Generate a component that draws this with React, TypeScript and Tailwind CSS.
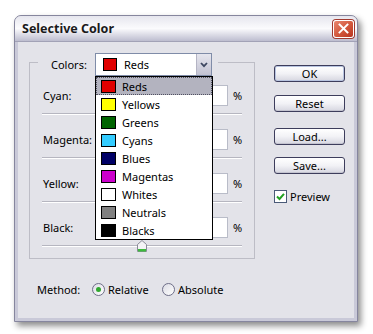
const items: { name: string; sw: string }[] = [
  { name: "Reds", sw: "bg-[#e00000]" },
  { name: "Yellows", sw: "bg-[#ffff00]" },
  { name: "Greens", sw: "bg-[#006400]" },
  { name: "Cyans", sw: "bg-[#33ccff]" },
  { name: "Blues", sw: "bg-[#000066]" },
  { name: "Magentas", sw: "bg-[#cc00cc]" },
  { name: "Whites", sw: "bg-[#ffffff]" },
  { name: "Neutrals", sw: "bg-[#808080]" },
  { name: "Blacks", sw: "bg-[#000000]" },
];

const rows = ["Cyan:", "Magenta:", "Yellow:", "Black:"];

function Button({ label, isDefault }: { label: string; isDefault?: boolean }) {
  return (
    <div
      className={
        "w-[71px] h-[17px] rounded-[3px] border border-[#3d3d5c] bg-gradient-to-b from-[#ffffff] via-[#f2f2f6] to-[#d6d6e0] flex items-center justify-center text-[11px] leading-none text-black " +
        (isDefault ? "shadow-[inset_0_0_0_1px_#b8c4e0]" : "shadow-[inset_0_-1px_0_#c4c4d0]")
      }
    >
      {label}
    </div>
  );
}

function Radio({ checked }: { checked?: boolean }) {
  return (
    <div className="w-[13px] h-[13px] rounded-full border border-[#6e6e88] bg-gradient-to-br from-[#dcdce4] to-[#ffffff] flex items-center justify-center">
      {checked && <div className="w-[5px] h-[5px] rounded-full bg-[#2fa82f]" />}
    </div>
  );
}

export default function App() {
  return (
    <div className="w-[373px] h-[334px] bg-white overflow-hidden font-['Noto_Sans',sans-serif] text-black">
      <div className="ml-[14px] mt-[15px] w-[344px] h-[307px] flex flex-col rounded-t-[7px] border border-[#86869e] bg-[#c9c9d8] shadow-[3px_4px_6px_rgba(0,0,0,0.45)]">
        {/* Title bar */}
        <div className="h-[26px] shrink-0 rounded-t-[6px] bg-gradient-to-b from-[#e6e6ee] via-[#fbfbfd] to-[#bdbdcf] flex items-center justify-between pl-[7px] pr-[3px] border-b border-[#a2a2b6]">
          <span className="text-[12.5px] font-bold leading-none text-[#1a1a1a] pt-[2px]">Selective Color</span>
          <div className="w-[21px] h-[18px] rounded-[3px] border border-white bg-gradient-to-br from-[#e9866f] via-[#d45a3e] to-[#b8341f] shadow-[0_0_0_1px_#a03a30] flex items-center justify-center">
            <svg width="11" height="11" viewBox="0 0 11 11">
              <path d="M1.5 1.5 L9.5 9.5 M9.5 1.5 L1.5 9.5" stroke="white" strokeWidth="1.9" strokeLinecap="square" />
            </svg>
          </div>
        </div>
        {/* Body */}
        <div className="flex-1 mx-[3px] mb-[3px] bg-[#e3e3e9] flex">
          {/* Left column */}
          <div className="ml-[11px] w-[226px] flex flex-col">
            <div className="mt-[20px] border border-[#bdbdc6] flex flex-col pb-[11px]">
              {/* legend row */}
              <div className="-mt-[10px] ml-[8px] self-start bg-[#e3e3e9] flex items-center pl-[13px] pr-[6px] h-[23px]">
                <span className="text-[11px] leading-none w-[44px]">Colors:</span>
                <div className="relative w-[117px] h-[23px] border border-[#7f8ca8] bg-white flex items-center">
                  <div className="ml-[7px] w-[14px] h-[13px] border border-black bg-[#e00000]" />
                  <span className="ml-[7px] text-[11px] leading-none flex-1">Reds</span>
                  <div className="w-[15px] h-[21px] border-l border-[#b4b4c4] bg-gradient-to-b from-[#e6e6ee] to-[#c2c2d2] flex items-center justify-center">
                    <svg width="8" height="6" viewBox="0 0 8 6">
                      <path d="M1 1 L4 4.2 L7 1" fill="none" stroke="#3c4660" strokeWidth="1.8" />
                    </svg>
                  </div>
                  {/* dropdown list */}
                  <div className="absolute left-[-1px] top-[22px] w-[118px] border border-black bg-white z-10 py-0">
                    {items.map((it, i) => (
                      <div
                        key={it.name}
                        className={
                          "h-[18px] flex items-center " +
                          (i === 0 ? "bg-[#b3b3bf] outline-1 outline-dotted outline-[#505060] -outline-offset-1" : "")
                        }
                      >
                        <div className={"ml-[5px] w-[15px] h-[13px] border border-black " + it.sw} />
                        <span className="ml-[6px] text-[11px] leading-none">{it.name}</span>
                      </div>
                    ))}
                  </div>
                </div>
              </div>
              {/* rows */}
              <div className="mt-[9px] flex flex-col gap-[14px]">
                {rows.map((r, i) => (
                  <div key={r} className="flex flex-col">
                    <div className="flex items-center pl-[13px] pr-[12px] h-[21px]">
                      <span className="flex-1 text-[11px] leading-none">{r}</span>
                      <div className="w-[40px] h-[21px] border border-[#b9bcc8] bg-white" />
                      <span className="ml-[5px] text-[11px] leading-none w-[9px]">%</span>
                    </div>
                    <div className="relative mt-[7px] mx-[12px] h-[2px] border-t border-[#b6b6c0] bg-white">
                      {i === 3 && (
                        <svg className="absolute left-[95px] top-[-6px]" width="10" height="12" viewBox="0 0 10 12">
                          <path d="M0.5 4.5 L5 0.5 L9.5 4.5 L9.5 11.5 L0.5 11.5 Z" fill="#f4f4f6" stroke="#8a8a98" />
                          <rect x="1" y="9" width="8" height="2.5" fill="#3dbb3d" />
                        </svg>
                      )}
                    </div>
                  </div>
                ))}
              </div>
            </div>
            {/* Method row */}
            <div className="mt-[23px] pl-[8px] flex items-center h-[14px] text-[11px] leading-none">
              <span className="w-[55px]">Method:</span>
              <Radio checked />
              <span className="ml-[3px] w-[54px]">Relative</span>
              <Radio />
              <span className="ml-[3px]">Absolute</span>
            </div>
          </div>
          {/* Right column */}
          <div className="ml-[19px] mt-[23px] flex flex-col">
            <Button label="OK" isDefault />
            <div className="mt-[13px]">
              <Button label="Reset" />
            </div>
            <div className="mt-[16px]">
              <Button label="Load..." />
            </div>
            <div className="mt-[12px]">
              <Button label="Save..." />
            </div>
            <div className="mt-[16px] flex items-center">
              <div className="w-[13px] h-[13px] border border-[#4a5a78] bg-white flex items-center justify-center">
                <svg width="9" height="9" viewBox="0 0 9 9">
                  <path d="M1 4.5 L3.5 7 L8 1.8" fill="none" stroke="#21a121" strokeWidth="2" />
                </svg>
              </div>
              <span className="ml-[3px] text-[11px] leading-none">Preview</span>
            </div>
          </div>
        </div>
      </div>
    </div>
  );
}
